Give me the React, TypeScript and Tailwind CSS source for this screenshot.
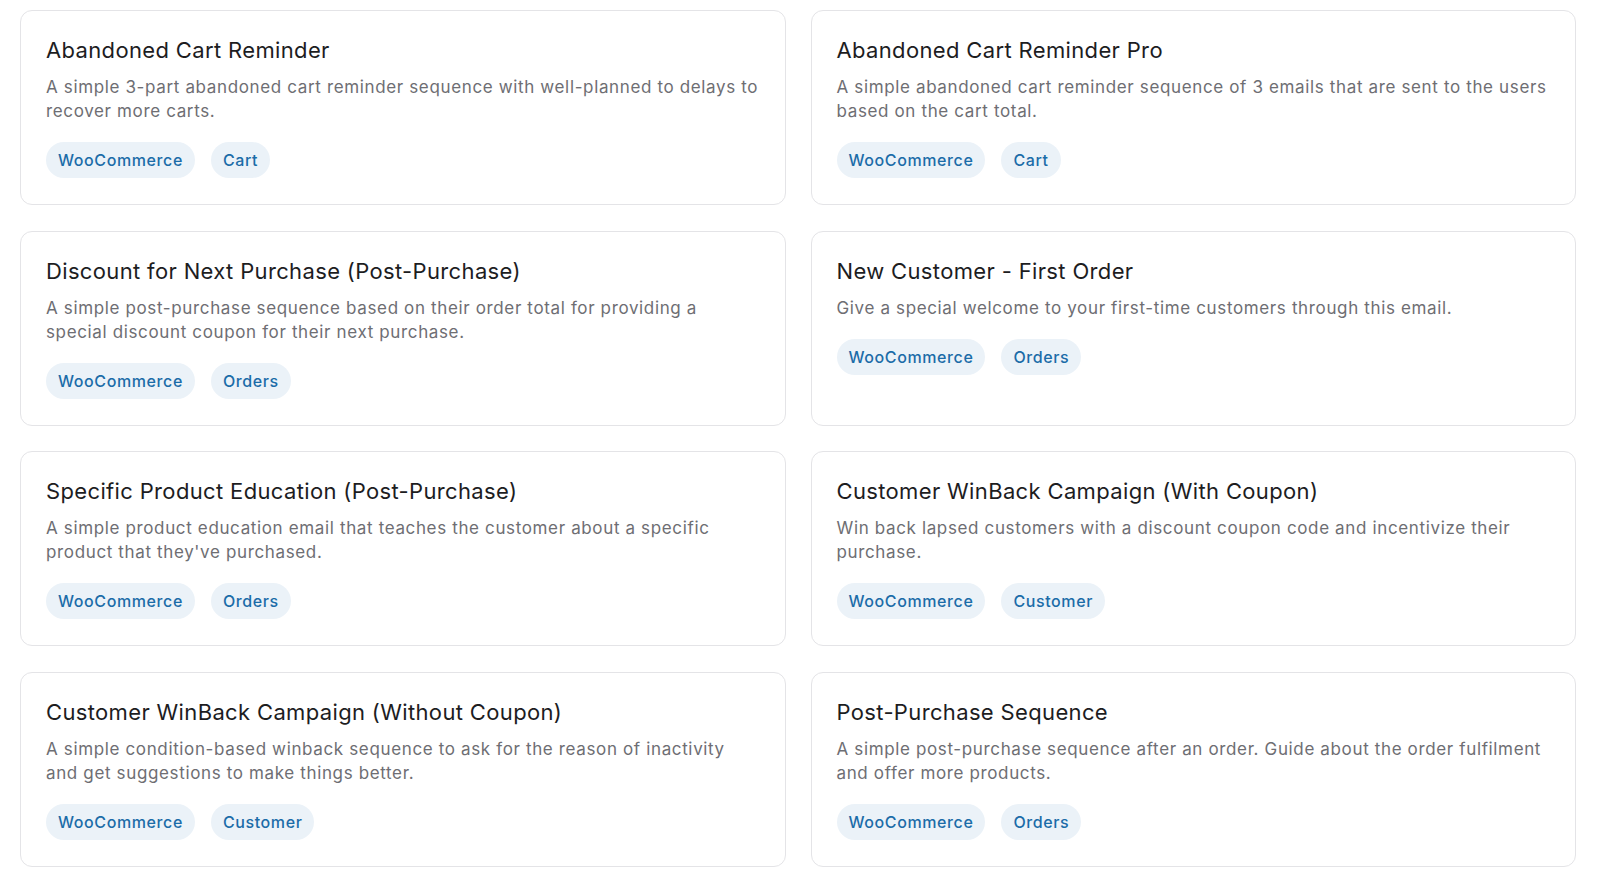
import React from "react";

type Template = {
  title: string;
  lines: string[];
  tags: string[];
};

const templates: Template[] = [
  {
    title: "Abandoned Cart Reminder",
    lines: [
      "A simple 3-part abandoned cart reminder sequence with well-planned to delays to",
      "recover more carts.",
    ],
    tags: ["WooCommerce", "Cart"],
  },
  {
    title: "Abandoned Cart Reminder Pro",
    lines: [
      "A simple abandoned cart reminder sequence of 3 emails that are sent to the users",
      "based on the cart total.",
    ],
    tags: ["WooCommerce", "Cart"],
  },
  {
    title: "Discount for Next Purchase (Post-Purchase)",
    lines: [
      "A simple post-purchase sequence based on their order total for providing a",
      "special discount coupon for their next purchase.",
    ],
    tags: ["WooCommerce", "Orders"],
  },
  {
    title: "New Customer - First Order",
    lines: ["Give a special welcome to your first-time customers through this email."],
    tags: ["WooCommerce", "Orders"],
  },
  {
    title: "Specific Product Education (Post-Purchase)",
    lines: [
      "A simple product education email that teaches the customer about a specific",
      "product that they've purchased.",
    ],
    tags: ["WooCommerce", "Orders"],
  },
  {
    title: "Customer WinBack Campaign (With Coupon)",
    lines: [
      "Win back lapsed customers with a discount coupon code and incentivize their",
      "purchase.",
    ],
    tags: ["WooCommerce", "Customer"],
  },
  {
    title: "Customer WinBack Campaign (Without Coupon)",
    lines: [
      "A simple condition-based winback sequence to ask for the reason of inactivity",
      "and get suggestions to make things better.",
    ],
    tags: ["WooCommerce", "Customer"],
  },
  {
    title: "Post-Purchase Sequence",
    lines: [
      "A simple post-purchase sequence after an order. Guide about the order fulfilment",
      "and offer more products.",
    ],
    tags: ["WooCommerce", "Orders"],
  },
];

function TemplateCard({ t }: { t: Template }) {
  return (
    <div className="h-[195px] overflow-hidden rounded-[12px] border border-[#e4e4e7] bg-white px-[25px] pt-[24px]">
      <h3 className="text-[22px] leading-[30px] font-normal tracking-[0.35px] text-[#1d1d1f]">
        {t.title}
      </h3>
      <p className="mt-[10px] text-[17px] leading-[24px] tracking-[0.64px] text-[#6e6e73]">
        {t.lines.map((line) => (
          <span key={line} className="block whitespace-nowrap">
            {line}
          </span>
        ))}
      </p>
      <div className="mt-[19px] flex gap-[16px]">
        {t.tags.map((tag) => (
          <span
            key={tag}
            className="inline-flex h-[36px] items-center rounded-full bg-[#ebf2f8] px-[12px] text-[16px] font-medium tracking-[0.6px] text-[#1b6ca8]"
          >
            {tag}
          </span>
        ))}
      </div>
    </div>
  );
}

export default function App() {
  return (
    <div
      className="min-h-[887px] bg-white pl-[20px] pr-[24px] pt-[10px]"
      style={{ fontFamily: "Inter, 'Noto Sans', sans-serif" }}
    >
      <div className="grid grid-cols-2 gap-x-[25px] gap-y-[25.5px]">
        {templates.map((t) => (
          <TemplateCard key={t.title} t={t} />
        ))}
      </div>
    </div>
  );
}
